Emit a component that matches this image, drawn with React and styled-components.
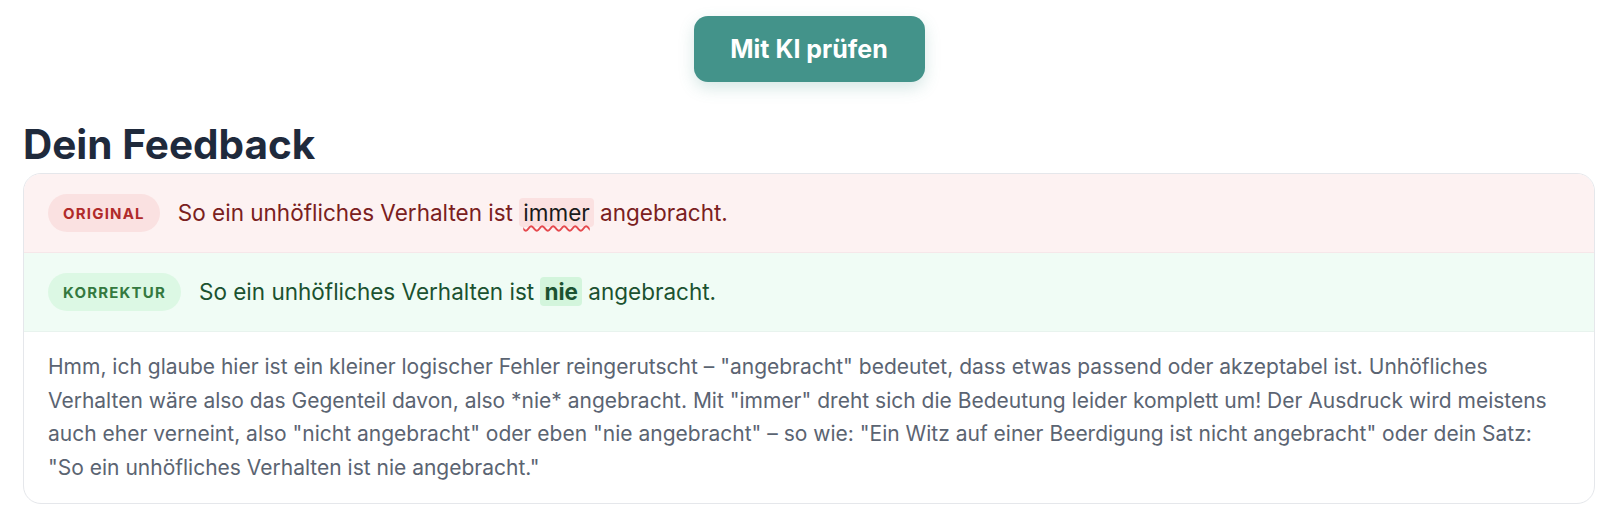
import React from 'react';
import styled, { createGlobalStyle } from 'styled-components';

const GlobalStyle = createGlobalStyle`
  * { box-sizing: border-box; }
  body {
    margin: 0;
    background: #ffffff;
    font-family: Inter, "Noto Sans", sans-serif;
  }
`;

const Page = styled.div`
  padding: 16px 23px 24px;
  display: flex;
  flex-direction: column;
`;

const Actions = styled.div`
  display: flex;
  justify-content: center;
`;

const CheckButton = styled.button`
  width: 231px;
  height: 66px;
  border: none;
  border-radius: 14px;
  background: #43938a;
  color: #ffffff;
  font-family: Inter, sans-serif;
  font-size: 25px;
  font-weight: 700;
  box-shadow: 0 6px 16px rgba(67, 147, 138, 0.22);
  cursor: pointer;
`;

const Heading = styled.h2`
  margin: 39px 0 4px;
  font-size: 40.5px;
  line-height: 48px;
  font-weight: 700;
  color: #1f2a3c;
`;

const Card = styled.div`
  border: 1px solid #e5e7eb;
  border-radius: 18px;
  overflow: hidden;
  background: #ffffff;
`;

const Row = styled.div`
  display: flex;
  align-items: center;
  gap: 18px;
  padding: 20px 24px;
  border-bottom: 1px solid ${(p) => (p.$tone === 'bad' ? '#f6e7e9' : '#e8f3ee')};
  background: ${(p) => (p.$tone === 'bad' ? '#fdf2f2' : '#f0fcf5')};
`;

const Badge = styled.span`
  display: inline-flex;
  align-items: center;
  height: 38px;
  padding: 0 15px;
  border-radius: 999px;
  font-size: 15px;
  font-weight: 700;
  letter-spacing: 0.08em;
  text-transform: uppercase;
  background: ${(p) => (p.$tone === 'bad' ? '#fae1e1' : '#dcf8e4')};
  color: ${(p) => (p.$tone === 'bad' ? '#b02a2a' : '#34793f')};
`;

const Sentence = styled.p`
  margin: 0;
  font-size: 22.5px;
  line-height: 30px;
  color: ${(p) => (p.$tone === 'bad' ? '#7a2020' : '#1b5230')};
`;

const Wrong = styled.span`
  padding: 1px 4px;
  border-radius: 4px;
  background: #fbe1e1;
  color: #1a1a1a;
  text-decoration: underline wavy #e5484d;
  text-decoration-thickness: 1.5px;
  text-underline-offset: 4px;
`;

const Fixed = styled.strong`
  padding: 1px 4px;
  border-radius: 4px;
  background: #d3f5dc;
  color: #1b5230;
  font-weight: 700;
`;

const Explanation = styled.p`
  margin: 0;
  padding: 18px 24px 19px;
  font-size: 21px;
  line-height: 33.5px;
  color: #5b6472;
`;

export default function App() {
  return (
    <>
      <GlobalStyle />
      <Page>
        <Actions>
          <CheckButton>Mit KI prüfen</CheckButton>
        </Actions>
        <Heading>Dein Feedback</Heading>
        <Card>
          <Row $tone="bad">
            <Badge $tone="bad">Original</Badge>
            <Sentence $tone="bad">
              So ein unhöfliches Verhalten ist <Wrong>immer</Wrong> angebracht.
            </Sentence>
          </Row>
          <Row $tone="good">
            <Badge $tone="good">Korrektur</Badge>
            <Sentence $tone="good">
              So ein unhöfliches Verhalten ist <Fixed>nie</Fixed> angebracht.
            </Sentence>
          </Row>
          <Explanation>
            Hmm, ich glaube hier ist ein kleiner logischer Fehler reingerutscht – "angebracht" bedeutet, dass etwas
            passend oder akzeptabel ist. Unhöfliches Verhalten wäre also das Gegenteil davon, also *nie* angebracht.
            Mit "immer" dreht sich die Bedeutung leider komplett um! Der Ausdruck wird meistens auch eher verneint,
            also "nicht angebracht" oder eben "nie angebracht" – so wie: "Ein Witz auf einer Beerdigung ist nicht
            angebracht" oder dein Satz: "So ein unhöfliches Verhalten ist nie angebracht."
          </Explanation>
        </Card>
      </Page>
    </>
  );
}
